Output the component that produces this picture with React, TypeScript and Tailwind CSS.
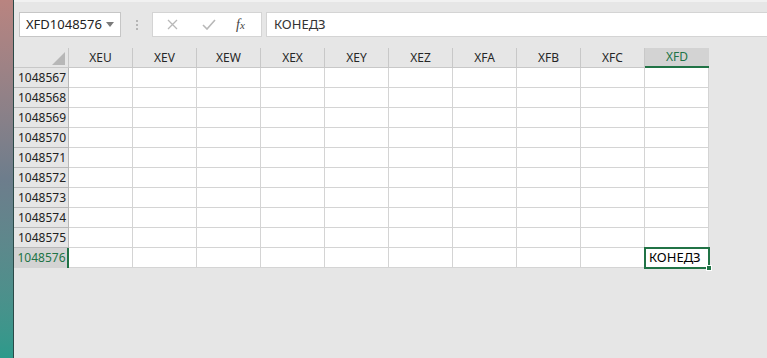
import React from 'react'

const COLS = ['XEU', 'XEV', 'XEW', 'XEX', 'XEY', 'XEZ', 'XFA', 'XFB', 'XFC', 'XFD']
const ROWS = [1048567, 1048568, 1048569, 1048570, 1048571, 1048572, 1048573, 1048574, 1048575, 1048576]

const ui = { fontFamily: '"Noto Sans", "Open Sans", sans-serif' }

function FormulaBar() {
  return (
    <div className="flex h-[25px] items-stretch mt-[10px]">
      {/* Name box */}
      <div className="ml-[5px] w-[102px] bg-white border border-[#c6c6c6] flex items-center pl-[6px] pr-[6px] justify-between">
        <span className="text-[13px] text-[#222] leading-none">XFD1048576</span>
        <svg width="8" height="5" viewBox="0 0 8 5">
          <path d="M0 0 L8 0 L4 5 Z" fill="#7a7a7a" />
        </svg>
      </div>

      {/* grip */}
      <div className="w-[31px] flex flex-col items-center justify-center gap-[2px]">
        <div className="w-[2px] h-[2px] bg-[#b5b5b5]" />
        <div className="w-[2px] h-[2px] bg-[#b5b5b5]" />
        <div className="w-[2px] h-[2px] bg-[#b5b5b5]" />
      </div>

      {/* cancel / enter / fx */}
      <div className="w-[110px] bg-white border border-[#d4d4d4] flex items-center">
        <svg className="ml-[14px]" width="11" height="11" viewBox="0 0 11 11">
          <path d="M1 1 L10 10 M10 1 L1 10" stroke="#b8b8b8" strokeWidth="1.3" />
        </svg>
        <svg className="ml-[24px]" width="14" height="11" viewBox="0 0 14 11">
          <path d="M1 6 L5 10 L13 1" stroke="#b8b8b8" strokeWidth="1.6" fill="none" />
        </svg>
        <span
          className="ml-[20px] text-[14px] text-[#444] italic leading-none"
          style={{ fontFamily: '"Liberation Serif", serif' }}
        >
          f<span className="text-[11px]">x</span>
        </span>
      </div>

      {/* formula input */}
      <div className="ml-[4px] flex-1 bg-white border border-[#d4d4d4] border-r-0 flex items-center pl-[7px]">
        <span className="text-[13px] text-[#333] leading-none">КОНЕДЗ</span>
      </div>
    </div>
  )
}

function Grid() {
  return (
    <div className="mt-[11px] grid grid-cols-[55px_repeat(10,64px)] w-max">
      {/* corner */}
      <div className="h-[20px] border-r border-b border-[#c8c8c8] relative">
        <svg className="absolute right-[3px] bottom-[2px]" width="13" height="13" viewBox="0 0 13 13">
          <path d="M13 0 L13 13 L0 13 Z" fill="#b7b7b7" />
        </svg>
      </div>
      {COLS.map((c) => {
        const sel = c === 'XFD'
        return (
          <div
            key={c}
            className={
              sel
                ? 'h-[20px] bg-[#d3d3d3] border-b-2 border-[#217346] flex items-center justify-center text-[12px] text-[#217346]'
                : 'h-[20px] border-r border-b border-[#c8c8c8] flex items-center justify-center text-[12px] text-[#262626]'
            }
          >
            {c}
          </div>
        )
      })}

      {ROWS.map((r) => {
        const lastRow = r === 1048576
        return (
          <React.Fragment key={r}>
            <div
              className={
                lastRow
                  ? 'h-[20px] bg-[#d3d3d3] border-r-2 border-[#217346] flex items-center justify-center pl-[2px] text-[12px] text-[#217346]'
                  : 'h-[20px] border-r border-b border-[#b8b8b8] flex items-center justify-center pl-[2px] text-[12px] text-[#222]'
              }
            >
              {r}
            </div>
            {COLS.map((c) => {
              const sel = lastRow && c === 'XFD'
              return (
                <div key={c} className="h-[20px] bg-white border-r border-b border-[#d4d4d4] relative">
                  {sel && (
                    <div className="absolute -left-[1px] -top-[1px] w-[66px] h-[22px] border-2 border-[#217346] flex items-end pl-[3px] pb-[1px]">
                      <span className="text-[13px] text-black leading-[17px]">КОНЕДЗ</span>
                      <div className="absolute -right-[4px] -bottom-[4px] w-[6px] h-[6px] bg-[#217346] border border-white" />
                    </div>
                  )}
                </div>
              )
            })}
          </React.Fragment>
        )
      })}
    </div>
  )
}

export default function App() {
  return (
    <div className="flex w-[767px] h-[358px] overflow-hidden" style={ui}>
      <div className="w-[14px] shrink-0 bg-gradient-to-b from-[#b98480] via-[#6d7d8c] to-[#2c9a8b] border-r border-[#2b4a48]" />
      <div className="flex-1 bg-[#e6e6e6] border-t-2 border-[#f1f1f1] flex flex-col">
        <FormulaBar />
        <Grid />
      </div>
    </div>
  )
}
